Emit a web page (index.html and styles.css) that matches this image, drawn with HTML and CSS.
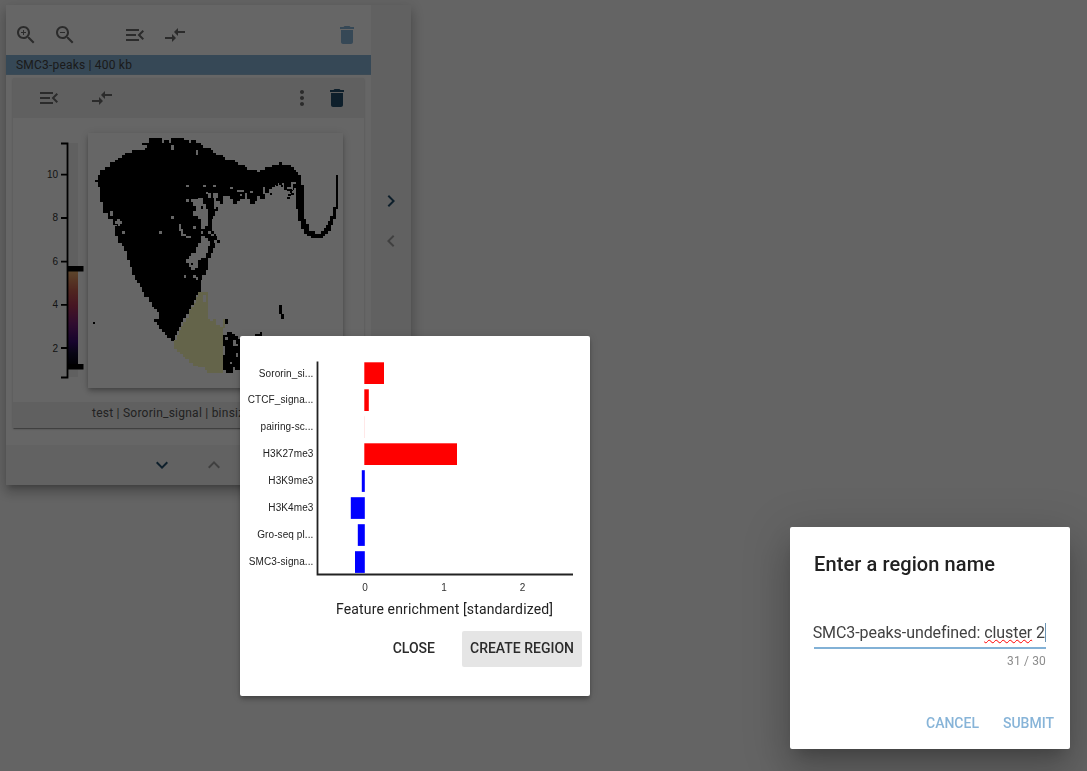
FILE: index.html
```html
<!DOCTYPE html>
<html lang="en">
<head>
<meta charset="utf-8">
<title>Region explorer</title>
<link rel="stylesheet" href="styles.css">
</head>
<body>
<svg class="defs" width="0" height="0">
  <symbol id="zoom-in" viewBox="0 0 24 24"><path d="M15.5 14h-.79l-.28-.27C15.41 12.59 16 11.11 16 9.5 16 5.91 13.09 3 9.5 3S3 5.91 3 9.5 5.91 16 9.5 16c1.61 0 3.09-.59 4.23-1.57l.27.28v.79l5 4.99L20.49 19l-4.99-5zm-6 0C7.01 14 5 11.99 5 9.5S7.01 5 9.5 5 14 7.01 14 9.5 11.99 14 9.5 14zM12 10h-2v2H9v-2H7V9h2V7h1v2h2v1z"/></symbol>
  <symbol id="zoom-out" viewBox="0 0 24 24"><path d="M15.5 14h-.79l-.28-.27C15.41 12.59 16 11.11 16 9.5 16 5.91 13.09 3 9.5 3S3 5.91 3 9.5 5.91 16 9.5 16c1.61 0 3.09-.59 4.23-1.57l.27.28v.79l5 4.99L20.49 19l-4.99-5zm-6 0C7.01 14 5 11.99 5 9.5S7.01 5 9.5 5 14 7.01 14 9.5 11.99 14 9.5 14zM7 9h5v1H7z"/></symbol>
  <symbol id="menu-open" viewBox="0 0 24 24"><path d="M3 18h13v-2H3v2zm0-5h10v-2H3v2zm0-7v2h13V6H3zm18 9.59L17.42 12 21 8.41 19.59 7l-5 5 5 5L21 15.59z"/></symbol>
  <symbol id="arrows" viewBox="0 0 24 24"><path d="M9.01 14H2v2h7.01v3L13 15l-3.99-4v3zm5.98-1v-3H22V8h-7.01V5L11 9l3.99 4z"/></symbol>
  <symbol id="trash" viewBox="0 0 24 24"><path d="M6 19c0 1.1.9 2 2 2h8c1.1 0 2-.9 2-2V7H6v12zM19 4h-3.5l-1-1h-5l-1 1H5v2h14V4z"/></symbol>
  <symbol id="more" viewBox="0 0 24 24"><path d="M12 8c1.1 0 2-.9 2-2s-.9-2-2-2-2 .9-2 2 .9 2 2 2zm0 2c-1.1 0-2 .9-2 2s.9 2 2 2 2-.9 2-2-.9-2-2-2zm0 6c-1.1 0-2 .9-2 2s.9 2 2 2 2-.9 2-2-.9-2-2-2z"/></symbol>
  <symbol id="down" viewBox="0 0 24 24"><path d="M16.59 8.59L12 13.17 7.41 8.59 6 10l6 6 6-6z"/></symbol>
  <symbol id="up" viewBox="0 0 24 24"><path d="M12 8l-6 6 1.41 1.41L12 10.83l4.59 4.58L18 14z"/></symbol>
  <symbol id="right" viewBox="0 0 24 24"><path d="M10 6L8.59 7.41 13.17 12l-4.58 4.59L10 18l6-6z"/></symbol>
  <symbol id="left" viewBox="0 0 24 24"><path d="M15.41 7.41L14 6l-6 6 6 6 1.41-1.41L10.83 12z"/></symbol>
</svg>

<main class="collection">
  <div class="collection-main">
    <div class="toolbar">
      <svg class="icon"><use href="#zoom-in"/></svg>
      <svg class="icon gap-16"><use href="#zoom-out"/></svg>
      <svg class="icon gap-46"><use href="#menu-open"/></svg>
      <svg class="icon gap-16"><use href="#arrows"/></svg>
      <svg class="icon push light"><use href="#trash"/></svg>
    </div>
    <div class="strip">SMC3-peaks | 400 kb</div>
    <section class="plot">
      <div class="plot-head">
        <svg class="icon"><use href="#menu-open"/></svg>
        <svg class="icon gap-29"><use href="#arrows"/></svg>
        <svg class="icon push"><use href="#more"/></svg>
        <svg class="icon gap-11 dark"><use href="#trash"/></svg>
      </div>
      <div class="plot-body">
        <svg class="scale" width="75" height="255" viewBox="13 133 75 255">
          <defs><linearGradient id="heat" x1="0" y1="0" x2="0" y2="1">
            <stop offset="0" stop-color="#e8b070"/><stop offset=".1" stop-color="#d8865a"/><stop offset=".2" stop-color="#c86050"/><stop offset=".36" stop-color="#b03858"/><stop offset=".55" stop-color="#782078"/><stop offset=".74" stop-color="#380c70"/><stop offset=".86" stop-color="#120d31"/><stop offset="1" stop-color="#000004"/>
          </linearGradient></defs>
          <rect x="68" y="143" width="10" height="234" fill="#f0f0f0"/>
          <rect x="68" y="271" width="10" height="96" fill="url(#heat)"/>
          <path d="M61 143.5H67.5V377.5H61M61 174.7H67M61 218H67M61 261.7H67M61 304.8H67M61 348H67" fill="none" stroke="#000" stroke-width="1.8"/>
          <path d="M68 266H83.5V271.5H68zM68 364H83.5V369.5H68z"/>
          <g class="ticks"><text x="58" y="178">10</text><text x="58" y="221.3">8</text><text x="58" y="265">6</text><text x="58" y="308.2">4</text><text x="58" y="351.7">2</text></g>
        </svg>
        <svg class="embedding" viewBox="24 24 765 765" shape-rendering="crispEdges">
          <path fill-rule="evenodd" d="M45 165H54V150H60V135H75V125H90V111H105V105H114V99H126V90H135V84H156V75H195V69H201V60H187V54H207V39H246V53H252V45H267V53H273V39H312V45H327V54H333V45H348V54H363V60H369V69H393V75H399V84H408V90H429V96H435V105H465V111H474V120H495V126H501V135H531V141H540V135H555V126H576V120H597V111H606V120H633V126H642V135H648V141H654V150H663V180H672V282H678V297H687V318H705V327H723V318H732V309H738V300H744V288H750V273H759V246H768V150H774V252H768V282H759V300H753V318H744V327H735V333H729V339H693V333H681V327H672V312H663V288H654V252H648V189H642V195H636V204H630V198H639V177H648V171H633V186H612V174H594V180H585V186H576V192H567V204H576V210H570V205H555V186H549V207H555V222H546V213H531V228H525V237H510V222H501V204H495V222H480V228H471V237H459V222H450V213H429V237H420V228H408V219H414V204H399V219H402V252H408V246H414V258H405V273H399V282H396V318H402V333H411V345H420V354H411V345H402V354H405V369H399V384H393V399H384V435H378V450H366V465H363V500H354V510H348V525H342V540H333V552H327V567H318V580H309V592H303V606H297V618H291V630H285V648H273V639H261V630H255V621H246V612H237V600H231V591H222V582H237V560H231V553H222V546H216V531H207V516H192V500H186V486H180V474H171V465H165V450H156V426H150V405H141V378H132V363H126V354H114V333H105V303H111V300H99V282H84V264H69V231H60V186H54V171H45z
            M273 60H282V75H273zM348 75H354V90H348zM318 180H327V186H318zM369 180H378V186H369zM90 258H99V273H90zM126 318H135V327H126zM237 318H246V327H237zM273 273H282V282H273zM318 222H327V231H318zM378 201H384V207H378zM399 180H408V186H399zM450 186H459V192H450zM471 195H492V201H471zM480 207H486V213H480zM510 198H519V204H510zM111 282H120V288H126V297H120V303H114V297H105V288H111z
            M297 297H303V312H309V327H318V333H333V339H318V333H303V318H297zM339 303H348V312H339zM363 318H369V327H363zM384 318H393V327H384z
            M333 222H348V231H354V219H369V237H378V252H384V303H375V312H363V282H354V273H339V258H348V243H339V231H333z
            M363 333H375V339H384V348H390V363H384V384H378V399H363V405H354V429H345V435H333V426H327V414H318V402H327V393H333V384H348V366H354V354H363zM312 450H318V459H312zM339 450H348V456H354V465H348V459H339zM393 327H408V333H393zM384 204H393V219H384z
            M333 414H339V420H333zM348 222H354V231H348zM363 243H369V252H363z"/>
          <path d="M579 174H588V180H579zM597 171H606V180H597zM588 177H594V183H588zM603 180H609V186H603zM612 186H621V195H612zM621 192H636V198H621zM624 207H633V213H624zM633 204H642V210H633zM621 216H630V222H621zM561 189H567V198H561zM540 210H546V222H540zM39 591H45V597H39z"/>
          <path d="M597 540H606V567H612V582H603V567H597zM435 582H444V597H435zM525 627H540V621H546V640H525z"/>
          <path fill-rule="evenodd" d="M441 621H456V627H465V633H474V642H480V735H465V726H459V744H438V735H429V690H435V663H429V630H441zM435 636H444V645H435zM459 645H468V657H474V663H459zM468 684H474V696H468zM450 711H456V717H450z"/>
          <path class="cluster" fill-rule="evenodd" d="M354 501H384V582H390V588H399V582H408V600H420V606H429V582H435V610H429V744H381V735H375V726H354V723H339V714H327V702H315V696H309V687H300V681H291V672H282V645H291V630H297V615H303V603H309V591H318V579H327V555H333V546H342V534H348V516H354zM369 510H378V531H369z"/>
        </svg>
      </div>
      <div class="plot-foot">test | Sororin_signal | binsize: 5000</div>
    </section>
    <div class="bottom-bar">
      <svg class="icon dark"><use href="#down"/></svg>
      <svg class="icon faded"><use href="#up"/></svg>
    </div>
  </div>
  <aside class="side-bar">
    <svg class="icon dark"><use href="#right"/></svg>
    <svg class="icon faded"><use href="#left"/></svg>
  </aside>
</main>

<div class="backdrop"></div>

<section class="dialog chart-dialog">
  <svg class="chart" width="350" height="295" viewBox="240 336 350 295">
    <g fill="#f00"><rect x="364.3" y="362.3" width="19.7" height="21.7"/><rect x="364.3" y="389.3" width="4.5" height="21.7"/><rect x="364.3" y="416.3" width=".3" height="21.7" opacity=".3"/><rect x="364.3" y="443.3" width="92.7" height="21.7"/></g>
    <g fill="#00f"><rect x="361.8" y="470.2" width="3" height="21.7"/><rect x="350.8" y="497.2" width="14" height="21.7"/><rect x="357.8" y="524.2" width="7" height="21.7"/><rect x="355" y="551.2" width="9.8" height="21.7"/></g>
    <path d="M317.5 361.5V574.5H573" fill="none" stroke="#222" stroke-width="1.8"/>
    <g class="labels"><text x="313.5" y="377">Sororin_si...</text><text x="313.5" y="403">CTCF_signa...</text><text x="313.5" y="430">pairing-sc...</text><text x="313.5" y="457">H3K27me3</text><text x="313.5" y="484">H3K9me3</text><text x="313.5" y="511">H3K4me3</text><text x="313.5" y="538">Gro-seq pl...</text><text x="313.5" y="565">SMC3-signa...</text></g>
    <g class="numbers"><text x="365" y="591">0</text><text x="444" y="591">1</text><text x="522.5" y="591">2</text></g>
    <text class="axis-title" x="444.5" y="614" textLength="217">Feature enrichment [standardized]</text>
  </svg>
  <div class="actions">
    <button class="button">CLOSE</button>
    <button class="button active">CREATE REGION</button>
  </div>
</section>

<section class="dialog name-dialog">
  <h1 class="title">Enter a region name</h1>
  <div class="field"><span class="value">SMC3-peaks-undefined: <span class="misspelt">cluster</span> 2</span></div>
  <div class="counter">31 / 30</div>
  <div class="name-actions"><span>CANCEL</span><span>SUBMIT</span></div>
</section>
</body>
</html>
```
FILE: styles.css
```css
* { box-sizing: border-box; }
body { margin: 0; height: 771px; overflow: hidden; background: #fafafa; font-family: Roboto, sans-serif; color: rgba(0,0,0,.87); }
.defs { position: absolute; }
.icon { width: 24px; height: 24px; flex: none; fill: #6b6b6b; }
.icon.light { fill: #87b4d8; }
.icon.dark { fill: #234f6c; }
.icon.faded { fill: #a0a0a0; }
.gap-11 { margin-left: 11px; }
.gap-16 { margin-left: 15.5px; }
.gap-29 { margin-left: 28.5px; }
.gap-46 { margin-left: 46px; }
.icon.push { margin-left: auto; }

.collection { display: flex; width: 405px; height: 480px; margin: 5px 0 0 6px; background: #fff; box-shadow: 0 5px 5px -3px rgba(0,0,0,.2), 0 8px 10px 1px rgba(0,0,0,.14), 0 3px 14px 2px rgba(0,0,0,.12); }
.collection-main { display: flex; flex-direction: column; width: 365px; }
.toolbar { display: flex; align-items: center; height: 50px; padding: 9px 12.5px 0 7.5px; }
.strip { height: 20px; padding-left: 10px; background: #87b4d8; border-bottom: 1px solid #94b8d4; font-size: 12px; line-height: 20px; letter-spacing: .2px; color: #444; }
.plot { display: flex; flex-direction: column; width: 351px; height: 350px; margin: 3px 0 17px 7px; box-shadow: 0 2px 1px -1px rgba(0,0,0,.2), 0 1px 1px rgba(0,0,0,.14), 0 1px 3px rgba(0,0,0,.12); }
.plot-head { display: flex; align-items: center; height: 40px; padding: 0 15.5px 0 24px; background: #f0f0f0; }
.plot-body { display: flex; height: 284px; padding-top: 15px; }
.scale { flex: none; }
.ticks { font: 10px "Liberation Sans", sans-serif; text-anchor: end; fill: #333; }
.embedding { width: 255px; height: 255px; flex: none; box-shadow: 0 2px 4px -1px rgba(0,0,0,.2), 0 4px 5px rgba(0,0,0,.14), 0 1px 10px rgba(0,0,0,.12); }
.cluster { fill: #fafab8; }
.plot-foot { height: 26px; padding-left: 79px; background: #f0f0f0; font-size: 12px; line-height: 22px; letter-spacing: .24px; color: #555; }
.bottom-bar { display: flex; justify-content: center; align-items: center; gap: 28px; height: 40px; padding-right: 1px; background: #f5f5f5; }
.side-bar { display: flex; flex-direction: column; align-items: center; justify-content: center; gap: 16px; width: 40px; padding-bottom: 48px; background: #f3f3f3; }

.backdrop { position: fixed; inset: 0; background: rgba(0,0,0,.6); }
.dialog { position: absolute; background: #fff; border-radius: 2px; }
.chart-dialog { left: 240px; top: 336px; width: 350px; height: 360px; box-shadow: 0 2px 4px -1px rgba(0,0,0,.2), 0 4px 5px rgba(0,0,0,.14), 0 1px 10px rgba(0,0,0,.12); }
.chart { display: block; }
.labels { font: 10px "Liberation Sans", sans-serif; letter-spacing: .1px; text-anchor: end; fill: #222; }
.numbers { font: 10px "Liberation Sans", sans-serif; text-anchor: middle; fill: #333; }
.axis-title { font: 14px Roboto, sans-serif; text-anchor: middle; fill: #222; }
.actions { display: flex; justify-content: flex-end; gap: 19px; padding-right: 8px; }
.button { height: 36px; padding: 0 8px 2px; border: 0; border-radius: 2px; background: none; font: 500 14px/34px Roboto, sans-serif; color: #2b2b2b; }
.button.active { width: 120px; background: #e5e5e5; white-space: nowrap; }

.name-dialog { left: 790px; top: 527px; width: 280px; height: 222px; padding: 24px; box-shadow: 0 11px 15px -7px rgba(0,0,0,.2), 0 24px 38px 3px rgba(0,0,0,.14), 0 9px 46px 8px rgba(0,0,0,.12); }
.title { margin: 0; font-size: 20px; font-weight: 500; line-height: 26px; letter-spacing: .1px; color: #212121; }
.field { display: flex; justify-content: flex-end; height: 32px; margin-top: 40px; border-bottom: 2px solid #82b1d6; }
.value { height: 19px; margin-top: 6px; border-right: 1px solid #6b94b4; font-size: 16px; line-height: 20px; letter-spacing: -.07px; white-space: nowrap; color: #424242; }
.misspelt { text-decoration: underline wavy #f00 1px; text-underline-offset: 1px; text-decoration-skip-ink: none; }
.counter { margin-top: 4px; font-size: 12px; line-height: 16px; letter-spacing: .15px; text-align: right; color: #8c8c8c; }
.name-actions { display: flex; justify-content: flex-end; gap: 24px; margin: 44px -8px 0 0; font-size: 14px; font-weight: 500; line-height: 20px; color: #87b4d8; }
```
